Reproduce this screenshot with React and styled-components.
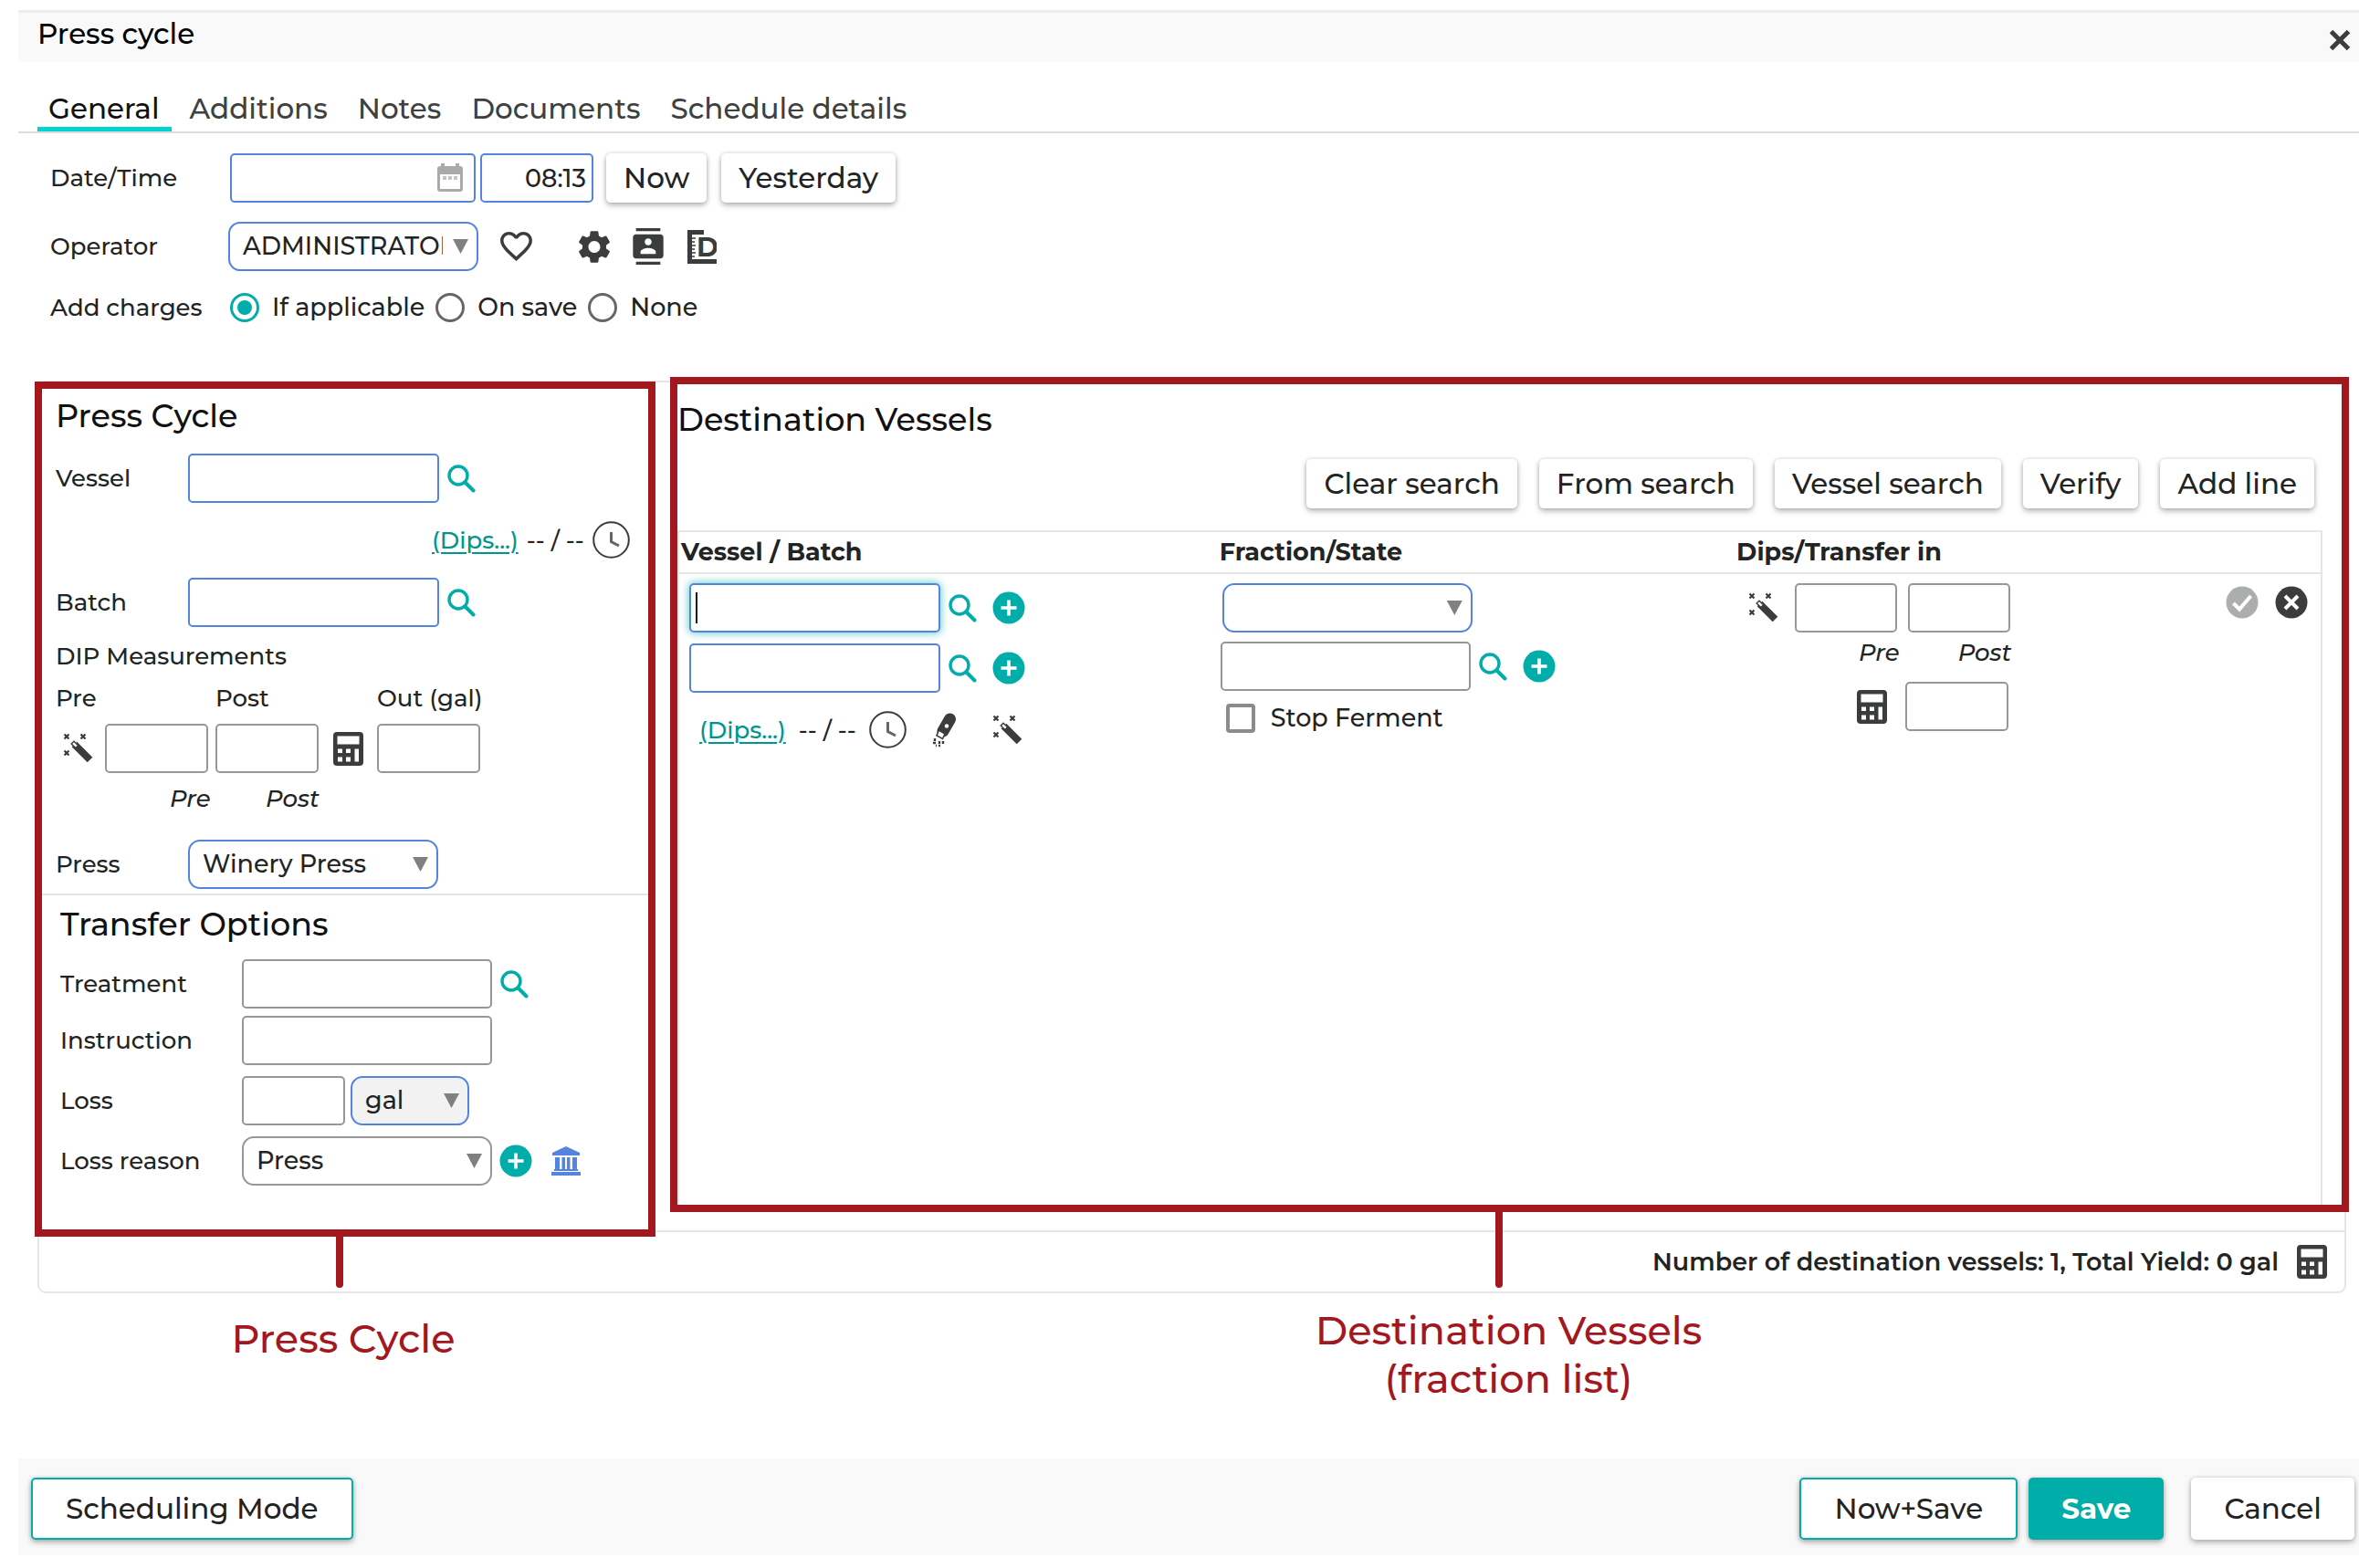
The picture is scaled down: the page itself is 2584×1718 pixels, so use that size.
import React, { useState } from "react";
import styled, { createGlobalStyle, css } from "styled-components";

const color = {
  text: "#222424",
  icon: "#3b3d3c",
  teal: "#00ada9",
  link: "#00968f",
  blue: "#5484e0",
  grey: "#979797",
  line: "#e6e6e6",
  bar: "#f9f9f9",
  red: "#a3171f",
};

const GlobalStyle = createGlobalStyle`
  *, *::before, *::after { box-sizing: border-box; }
  body {
    margin: 0;
    background: #fff;
    color: ${color.text};
    font-family: Montserrat, Inter, "Open Sans", sans-serif;
    font-size: 26px;
    font-weight: 500;
    line-height: 32px;
  }
  button, input, select { font: inherit; color: inherit; }
`;

/* ---------- page frame ---------- */

const Page = styled.div`
  padding: 11px 0 14px 20px;
`;

const TitleBar = styled.header`
  display: flex;
  justify-content: space-between;
  height: 57px;
  padding: 5px 9px 0 21px;
  border-top: 3px solid #ececec;
  background: ${color.bar};
`;

const Title = styled.h1`
  margin: 0;
  color: #000;
  font-size: 31px;
  font-weight: 500;
  line-height: 36px;
`;

const Tabs = styled.nav`
  display: flex;
  gap: 8px;
  padding: 28px 0 0 21px;
  border-bottom: 2px solid #dcdcdc;
`;

const Tab = styled.a`
  height: 48px;
  padding: 3px 13px 0 12px;
  border-bottom: 5px solid ${(p) => (p.$active ? "#00d4d0" : "transparent")};
  color: ${(p) => (p.$active ? "#111" : "#3f4141")};
  font-size: 31px;
  line-height: 40px;
  text-decoration: none;
`;

const Form = styled.div`
  display: grid;
  gap: 21px;
  padding: 22px 0 0 35px;
`;

/* ---------- shared parts ---------- */

const Row = styled.div`
  display: flex;
  align-items: center;
  gap: ${(p) => p.$gap ?? 0}px;
  margin-top: ${(p) => p.$top ?? 0}px;
  padding-left: ${(p) => p.$indent ?? 0}px;
  min-height: ${(p) => p.$height ?? 0}px;
`;

const Label = styled.label`
  flex: none;
  width: ${(p) => p.$width}px;
`;

const Text = styled.span`
  font-style: ${(p) => (p.$italic ? "italic" : "normal")};
  white-space: nowrap;
`;

const Field = styled.input`
  flex: none;
  width: ${(p) => p.$width ?? 275}px;
  height: 54px;
  padding: 0 6px;
  border: 2px solid ${(p) => (p.$required ? color.blue : color.grey)};
  border-radius: 5px;
  background: #fff;
  outline: none;
  font-size: 27px;
  text-align: ${(p) => p.$align ?? "left"};
`;

const FocusedField = styled.span`
  position: relative;
  display: flex;
  border-radius: 5px;
  box-shadow: 0 0 8px 1px rgba(0, 173, 169, 0.6);

  input { caret-color: transparent; }

  &::after {
    content: "";
    position: absolute;
    left: 7px;
    top: 10px;
    width: 2px;
    height: 34px;
    background: #111;
  }
`;

const DateField = styled.span`
  position: relative;
  display: flex;

  svg { position: absolute; right: 14px; top: 11px; }
`;

const SelectBox = styled.span`
  position: relative;
  display: flex;
  flex: none;
  width: ${(p) => p.$width ?? 274}px;

  &::after {
    content: "";
    position: absolute;
    right: 11px;
    top: 19px;
    width: 17px;
    height: 16px;
    background: #808080;
    clip-path: polygon(0 0, 100% 0, 50% 100%);
    pointer-events: none;
  }
`;

const SelectControl = styled.select`
  appearance: none;
  width: 100%;
  height: 54px;
  padding: 0 37px 0 14px;
  border: 2px solid ${(p) => (p.$required ? color.blue : color.grey)};
  border-radius: 13px;
  background: ${(p) => (p.$muted ? "#f2f2f2" : "#fff")};
  outline: none;
  font-size: 27px;
  text-overflow: clip;
`;

const Button = styled.button`
  height: 54px;
  padding: 0 19px;
  border: 0;
  border-radius: 5px;
  background: #fff;
  box-shadow: 0 3px 6px rgba(0, 0, 0, 0.28), 0 0 4px rgba(0, 0, 0, 0.14);
  font-size: 31px;
  line-height: 40px;
  white-space: nowrap;
`;

const ActionButton = styled(Button)`
  height: 68px;
  padding: 0 36px;
  ${(p) => p.$outlined && css`border: 2px solid ${color.teal};`}
  ${(p) => p.$primary && css`
    background: ${color.teal};
    color: #fff;
    font-weight: 700;
  `}
`;

const IconButton = styled.button`
  display: flex;
  flex: none;
  align-items: center;
  justify-content: center;
  padding: 0;
  border: 0;
  background: none;
  color: ${(p) => p.$color ?? color.icon};
  margin-left: ${(p) => p.$left ?? 0}px;
`;

const DipsLink = styled.a`
  color: ${color.link};
  text-decoration-thickness: 2px;
  text-underline-offset: 4px;
`;

const Radio = styled.input`
  appearance: none;
  flex: none;
  display: grid;
  place-items: center;
  width: 32px;
  height: 32px;
  margin: 0;
  border: 3px solid #666;
  border-radius: 50%;

  &:checked { border-color: ${color.teal}; }
  &:checked::after {
    content: "";
    width: 16px;
    height: 16px;
    border-radius: 50%;
    background: ${color.teal};
  }
`;

const Choice = styled.label`
  display: flex;
  align-items: center;
  gap: 14px;
  font-size: 27px;
`;

const Check = styled.input`
  appearance: none;
  width: 32px;
  height: 32px;
  margin: 0 3px 0 0;
  border: 4px solid #8b8b8b;
  border-radius: 4px;

  &:checked { background: ${color.teal}; }
`;

/* ---------- panel ---------- */

const Panel = styled.section`
  margin: 61px 14px 0 21px;
  border: 2px solid ${color.line};
  border-radius: 9px;
`;

const Columns = styled.div`
  display: grid;
  grid-template-columns: 680px minmax(0, 1fr);
  gap: 16px;
  margin: 0 -5px;
`;

const Frame = styled.section`
  position: relative;
  display: flex;
  flex-direction: column;
  border: 8px solid ${color.red};
  background: #fff;

  &::after {
    content: "";
    position: absolute;
    top: 100%;
    width: 8px;
    border-radius: 0 0 4px 4px;
    background: ${color.red};
  }
`;

const SourceFrame = styled(Frame)`
  margin: -1px 0 -7px;

  &::after { left: calc(50% - 10px); height: 64px; }
`;

const DestinationFrame = styled(Frame)`
  margin: -6px 0 20px;
  padding-top: 17px;

  &::after { left: calc(50% - 16px); height: 91px; }
`;

const Section = styled.div`
  padding: ${(p) => p.$pad};

  & + & { border-top: 2px solid ${color.line}; }
`;

const Heading = styled.h2`
  margin: 0;
  color: #111;
  font-size: 35px;
  font-weight: 500;
  line-height: 44px;
`;

const DipGrid = styled.div`
  display: grid;
  grid-template-columns: 54px 113px 8px 113px 64px 1fr;
  align-items: center;
  row-gap: 12px;
  margin-top: 14px;
`;

const Cell = styled.span`
  display: flex;
  grid-column: ${(p) => p.$col};
  justify-content: ${(p) => p.$justify ?? "flex-start"};
  font-style: ${(p) => (p.$italic ? "italic" : "normal")};
  padding-left: ${(p) => p.$indent ?? 0}px;
  white-space: nowrap;
`;

const Toolbar = styled.div`
  display: flex;
  justify-content: flex-end;
  gap: 24px;
  margin: 21px 30px 24px 0;
`;

const TableArea = styled.div`
  flex: 1;
  margin-right: 21px;
  border: 2px solid ${color.line};
  border-bottom: 0;
`;

const Table = styled.table`
  width: 100%;
  table-layout: fixed;
  border-collapse: collapse;

  th {
    height: 45px;
    padding: 0 0 0 2px;
    border-bottom: 2px solid ${color.line};
    font-size: 27px;
    font-weight: 700;
    text-align: left;
  }
  td {
    padding: 10px 0 0;
    vertical-align: top;
  }
`;

const Col = styled.col`
  width: ${(p) => p.$width};
`;

const Totals = styled.div`
  display: flex;
  align-items: center;
  justify-content: flex-end;
  gap: 20px;
  height: 67px;
  padding-right: 19px;
  border-top: 2px solid ${color.line};
  font-size: 27px;
  font-weight: 600;
`;

const Callouts = styled(Columns)`
  margin: 14px 11px 0 16px;
  color: ${color.red};
  font-size: 43px;
  line-height: 53px;
  text-align: center;
`;

const Callout = styled.p`
  margin: 0;
  padding-top: ${(p) => p.$drop ?? 0}px;
`;

const ActionBar = styled.footer`
  display: flex;
  gap: 12px;
  margin-top: 61px;
  padding: 21px 5px 17px 14px;
  background: ${color.bar};
`;

const Spacer = styled.span`
  flex: ${(p) => (p.$width ? "none" : 1)};
  width: ${(p) => p.$width ?? 0}px;
`;

/* ---------- icons ---------- */

const Svg = ({ w, h, box, children }) => (
  <svg width={w} height={h} viewBox={box} fill="currentColor" aria-hidden="true">
    {children}
  </svg>
);

const SearchIcon = () => (
  <Svg w={31} h={31} box="0 0 31 31">
    <circle cx="12" cy="12" r="10" fill="none" stroke="currentColor" strokeWidth="3.4" />
    <path d="M19.5 19.5L28.5 28.5" stroke="currentColor" strokeWidth="4" strokeLinecap="round" />
  </Svg>
);

const PlusIcon = () => (
  <Svg w={36} h={36} box="0 0 36 36">
    <circle cx="18" cy="18" r="17.5" />
    <path d="M18 9.5v17M9.5 18h17" stroke="#fff" strokeWidth="3.6" />
  </Svg>
);

const ClockIcon = () => (
  <Svg w={41} h={41} box="0 0 41 41">
    <circle cx="20.5" cy="20.5" r="19.3" fill="none" stroke="currentColor" strokeWidth="2" />
    <path d="M20.5 12v10.5l8.5 4.5" fill="none" stroke="#666" strokeWidth="3" />
  </Svg>
);

const WandIcon = () => (
  <Svg w={34} h={34} box="0 0 34 34">
    <path d="M12.5 12.5L29.5 29.5" stroke="currentColor" strokeWidth="8" />
    <path d="M12 9.2L16.6 13.8L13.8 16.6L9.2 12Z" fill="#fff" stroke="currentColor" strokeWidth="1.4" />
    <path
      d="M1.5 1.5l5 5M6.5 1.5l-5 5M19.5 1.5l5 5M24.5 1.5l-5 5M1.5 19.5l5 5M6.5 19.5l-5 5"
      stroke="currentColor"
      strokeWidth="2.2"
    />
  </Svg>
);

const CalculatorIcon = () => (
  <Svg w={33} h={37} box="0 0 33 37">
    <path
      fillRule="evenodd"
      d="M4 0h25a4 4 0 0 1 4 4v29a4 4 0 0 1-4 4H4a4 4 0 0 1-4-4V4a4 4 0 0 1 4-4zM4.500 4.500v9h24v-9zM5 18.500v4.500h5v-4.500zM14 18.500v4.500h5v-4.500zM5 27.500v5h5v-5zM14 27.500v5h5v-5zM23.500 18.500v14h4.500v-14z"
    />
  </Svg>
);

const CalendarIcon = () => (
  <Svg w={28} h={32} box="0 0 28 32">
    <path
      fill="#a9abaa"
      fillRule="evenodd"
      d="M4 0h4v3h12V0h4v3h1a3 3 0 0 1 3 3v22a3 3 0 0 1-3 3H3a3 3 0 0 1-3-3V6a3 3 0 0 1 3-3h1zM3 12v16h22V12z"
    />
    <path fill="#c4c6c5" d="M6 14h4v4H6zM12 14h4v4h-4zM18 14h4v4h-4z" />
  </Svg>
);

const HeartIcon = () => (
  <Svg w={35} h={32} box="2 3 20 18.35">
    <path d="M16.5 3c-1.74 0-3.41.81-4.5 2.09C10.91 3.81 9.24 3 7.5 3 4.42 3 2 5.42 2 8.5c0 3.78 3.4 6.86 8.55 11.54L12 21.35l1.45-1.32C18.6 15.36 22 12.28 22 8.5 22 5.42 19.58 3 16.5 3zm-4.4 15.55l-.1.1-.1-.1C7.14 14.24 4 11.39 4 8.5 4 6.5 5.5 5 7.5 5c1.54 0 3.04.99 3.57 2.36h1.87C13.46 5.99 14.96 5 16.5 5c2 0 3.5 1.5 3.5 3.5 0 2.89-3.14 5.74-7.9 10.05z" />
  </Svg>
);

const GearIcon = () => (
  <Svg w={34} h={35} box="2.6 2.4 18.8 19.2">
    <path d="M19.14 12.94c.04-.3.06-.61.06-.94 0-.32-.02-.64-.07-.94l2.03-1.58c.18-.14.23-.41.12-.61l-1.92-3.32c-.12-.22-.37-.29-.59-.22l-2.39.96c-.5-.38-1.03-.7-1.62-.94L14.4 2.81c-.04-.24-.24-.41-.48-.41h-3.84c-.24 0-.43.17-.47.41L9.25 5.35c-.59.24-1.13.57-1.62.94l-2.39-.96c-.22-.08-.47 0-.59.22L2.74 8.87c-.12.21-.08.47.12.61l2.03 1.58c-.05.3-.09.63-.09.94s.02.64.07.94l-2.03 1.58c-.18.14-.23.41-.12.61l1.920 3.320c.12.22.37.29.59.22l2.390-.96c.5.38 1.030.7 1.620.94l.36 2.540c.05.24.24.41.48.41h3.840c.24 0 .44-.17.47-.41l.36-2.540c.59-.24 1.130-.56 1.620-.94l2.390.96c.22.08.47 0 .59-.22l1.920-3.320c.12-.22.07-.47-.12-.61zM12 15.600c-1.980 0-3.600-1.620-3.600-3.600s1.620-3.600 3.600-3.600 3.600 1.620 3.600 3.600-1.620 3.600-3.600 3.600z" />
  </Svg>
);

const ContactsIcon = () => (
  <Svg w={34} h={40} box="2 0 20 24">
    <path d="M20 0H4v2h16V0zM4 24h16v-2H4v2zM20 4H4c-1.1 0-2 .9-2 2v12c0 1.1.9 2 2 2h16c1.100 0 2-.9 2-2V6c0-1.100-.9-2-2-2zm-8 2.750c1.240 0 2.250 1.010 2.250 2.250s-1.010 2.250-2.250 2.250S9.750 10.240 9.750 9 10.760 6.750 12 6.750zM17 17H7v-1.500c0-1.670 3.330-2.500 5-2.500s5 .83 5 2.500V17z" />
  </Svg>
);

const RulerIcon = () => (
  <Svg w={32} h={37} box="0 0 32 37">
    <path d="M0 0h18v5H5v27h27v5H0z" />
    <path d="M5 9h4M5 13h3M5 17h4M5 21h3M5 25h4M5 29h3" stroke="currentColor" strokeWidth="1.600" />
    <text x="10" y="29" fontSize="29" fontWeight="700">D</text>
  </Svg>
);

const TubeIcon = () => (
  <Svg w={28} h={38} box="0 0 28 38">
    <path d="M19.500 7L12 20" stroke="currentColor" strokeWidth="13" strokeLinecap="round" />
    <path d="M7.500 19L14 23L11.500 28.500L5 25Z" fill="#fff" stroke="currentColor" strokeWidth="1.600" />
    <circle cx="16" cy="14.500" r="2.200" fill="#fff" />
    <path d="M3 28v3M8 31v3M1 33h3M7 36h2M12 31v3M4 36h1" stroke="currentColor" strokeWidth="2.400" />
  </Svg>
);

const BankIcon = () => (
  <Svg w={32} h={32} box="0 0 32 32">
    <path d="M16 0L31 7v3H1V7zM4 12h5v13H4zM11.500 12h3.500v13h-3.500zM17 12h3.500v13H17zM23 12h5v13h-5zM3 25h26v2H3zM0 28h32v4H0z" />
  </Svg>
);

const CheckIcon = () => (
  <Svg w={36} h={36} box="0 0 36 36">
    <circle cx="18" cy="18" r="17.500" fill="#acaeae" />
    <path d="M8.500 19l6.500 6.500L27.500 11" fill="none" stroke="#fff" strokeWidth="4" />
  </Svg>
);

const RemoveIcon = () => (
  <Svg w={36} h={36} box="0 0 36 36">
    <circle cx="18" cy="18" r="17.500" />
    <path d="M11 11l14 14M25 11L11 25" stroke="#fff" strokeWidth="4" />
  </Svg>
);

const CloseIcon = () => (
  <Svg w={24} h={24} box="0 0 24 24">
    <path d="M2.500 2.500l19 19M21.500 2.500l-19 19" stroke="currentColor" strokeWidth="5" />
  </Svg>
);

/* ---------- composed controls ---------- */

const Select = ({ id, label, width, required, muted, options }) => (
  <SelectBox $width={width}>
    <SelectControl id={id} aria-label={label} $required={required} $muted={muted}>
      {options.map((o) => (
        <option key={o}>{o}</option>
      ))}
    </SelectControl>
  </SelectBox>
);

const Search = () => (
  <IconButton type="button" aria-label="Search" $color={color.teal} $left={9}>
    <SearchIcon />
  </IconButton>
);

const Add = ({ left = 17 }) => (
  <IconButton type="button" aria-label="Add" $color={color.teal} $left={left}>
    <PlusIcon />
  </IconButton>
);

const Wand = ({ left }) => (
  <IconButton type="button" aria-label="Fill in" $left={left}>
    <WandIcon />
  </IconButton>
);

const Calculate = ({ left }) => (
  <IconButton type="button" aria-label="Calculate" $left={left}>
    <CalculatorIcon />
  </IconButton>
);

const TABS = ["General", "Additions", "Notes", "Documents", "Schedule details"];
const CHARGES = ["If applicable", "On save", "None"];
const TOOLS = ["Clear search", "From search", "Vessel search", "Verify", "Add line"];

function PressCycleSection() {
  return (
    <Section $pad="8px 15px 5px">
      <Heading>Press Cycle</Heading>
      <Row $top={19}>
        <Label htmlFor="vessel" $width={145}>Vessel</Label>
        <Field id="vessel" $required />
        <Search />
      </Row>
      <Row $top={20} $gap={9} $indent={412}>
        <DipsLink href="#dips">(Dips...)</DipsLink>
        <Text>-- / --</Text>
        <IconButton type="button" aria-label="Dip time"><ClockIcon /></IconButton>
      </Row>
      <Row $top={21}>
        <Label htmlFor="batch" $width={145}>Batch</Label>
        <Field id="batch" $required />
        <Search />
      </Row>
      <Row $top={16}>DIP Measurements</Row>
      <DipGrid>
        <Cell $col="1 / 3">Pre</Cell>
        <Cell $col="4">Post</Cell>
        <Cell $col="6">Out (gal)</Cell>
        <Cell $col="1" $indent={8}><Wand /></Cell>
        <Field aria-label="Pre" $width={113} />
        <Cell $col="4"><Field aria-label="Post" $width={113} /></Cell>
        <Calculate />
        <Field aria-label="Out (gal)" $width={113} />
        <Cell $col="2" $indent={71} $italic>Pre</Cell>
        <Cell $col="4" $indent={55} $italic>Post</Cell>
      </DipGrid>
      <Row $top={29}>
        <Label htmlFor="press" $width={145}>Press</Label>
        <Select id="press" required options={["Winery Press"]} />
      </Row>
    </Section>
  );
}

function TransferSection() {
  return (
    <Section $pad="10px 20px 48px">
      <Heading>Transfer Options</Heading>
      <Row $top={16}>
        <Label htmlFor="treatment" $width={199}>Treatment</Label>
        <Field id="treatment" $width={274} />
        <Search />
      </Row>
      <Row $top={8}>
        <Label htmlFor="instruction" $width={199}>Instruction</Label>
        <Field id="instruction" $width={274} />
      </Row>
      <Row $top={12}>
        <Label htmlFor="loss" $width={199}>Loss</Label>
        <Row $gap={6}>
          <Field id="loss" $width={113} />
          <Select label="Loss unit" width={130} required muted options={["gal"]} />
        </Row>
      </Row>
      <Row $top={12}>
        <Label htmlFor="reason" $width={199}>Loss reason</Label>
        <Select id="reason" options={["Press"]} />
        <Add left={8} />
        <IconButton type="button" aria-label="Account" $color={color.blue} $left={21}>
          <BankIcon />
        </IconButton>
      </Row>
    </Section>
  );
}

function DestinationTable() {
  const [stopped, setStopped] = useState(false);
  return (
    <TableArea>
      <Table>
        <colgroup>
          <Col $width="32.8%" />
          <Col $width="31.5%" />
          <Col $width="28.9%" />
          <Col />
        </colgroup>
        <thead>
          <tr>
            <th>Vessel / Batch</th>
            <th>Fraction/State</th>
            <th>Dips/Transfer in</th>
            <th aria-label="Actions" />
          </tr>
        </thead>
        <tbody>
          <tr>
            <td>
              <Row $indent={11}>
                <FocusedField>
                  <Field aria-label="Destination vessel" $required autoFocus />
                </FocusedField>
                <Search />
                <Add />
              </Row>
              <Row $top={12} $indent={11}>
                <Field aria-label="Destination batch" $required />
                <Search />
                <Add />
              </Row>
              <Row $top={20} $gap={14} $indent={22}>
                <DipsLink href="#dips">(Dips...)</DipsLink>
                <Text>-- / --</Text>
                <IconButton type="button" aria-label="Dip time"><ClockIcon /></IconButton>
                <IconButton type="button" aria-label="Sample" $left={14}><TubeIcon /></IconButton>
                <Wand left={24} />
              </Row>
            </td>
            <td>
              <Row $indent={5}>
                <Select label="Fraction" required options={[""]} />
              </Row>
              <Row $top={10} $indent={3}>
                <Field aria-label="State" $width={274} />
                <Search />
                <Add />
              </Row>
              <Row $top={14} $indent={9}>
                <Choice>
                  <Check
                    type="checkbox"
                    checked={stopped}
                    onChange={(e) => setStopped(e.target.checked)}
                  />
                  <Text>Stop Ferment</Text>
                </Choice>
              </Row>
            </td>
            <td>
              <Row $gap={12} $indent={15}>
                <Wand />
                <Row $indent={5}><Field aria-label="Pre" $width={112} /></Row>
                <Field aria-label="Post" $width={112} />
              </Row>
              <Row $top={6} $gap={64} $indent={136}>
                <Text $italic>Pre</Text>
                <Text $italic>Post</Text>
              </Row>
              <Row $top={16} $gap={20} $indent={134}>
                <Calculate />
                <Field aria-label="Transfer in" $width={113} />
              </Row>
            </td>
            <td>
              <Row $gap={18} $indent={18} $height={42}>
                <IconButton type="button" aria-label="Confirm line"><CheckIcon /></IconButton>
                <IconButton type="button" aria-label="Remove line"><RemoveIcon /></IconButton>
              </Row>
            </td>
          </tr>
        </tbody>
      </Table>
    </TableArea>
  );
}

export default function App() {
  const [charge, setCharge] = useState("If applicable");
  return (
    <Page>
      <GlobalStyle />
      <TitleBar>
        <Title>Press cycle</Title>
        <IconButton type="button" aria-label="Close"><CloseIcon /></IconButton>
      </TitleBar>
      <Tabs>
        {TABS.map((tab, i) => (
          <Tab key={tab} href={`#${tab}`} $active={i === 0}>{tab}</Tab>
        ))}
      </Tabs>

      <Form>
        <Row>
          <Label htmlFor="date" $width={197}>Date/Time</Label>
          <Row $gap={5}>
            <DateField>
              <Field id="date" $width={269} $required />
              <CalendarIcon />
            </DateField>
            <Field aria-label="Time" $width={124} $required $align="right" defaultValue="08:13" />
          </Row>
          <Row $gap={16} $indent={14}>
            <Button type="button">Now</Button>
            <Button type="button">Yesterday</Button>
          </Row>
        </Row>
        <Row>
          <Label htmlFor="operator" $width={195}>Operator</Label>
          <Select id="operator" required options={["ADMINISTRATOR"]} />
          <IconButton type="button" aria-label="Favourite" $left={24}><HeartIcon /></IconButton>
          <IconButton type="button" aria-label="Settings" $left={51}><GearIcon /></IconButton>
          <IconButton type="button" aria-label="Contacts" $left={25}><ContactsIcon /></IconButton>
          <IconButton type="button" aria-label="Dip chart" $left={26}><RulerIcon /></IconButton>
        </Row>
        <Row $height={38}>
          <Label as="span" id="charges" $width={197}>Add charges</Label>
          <Row role="radiogroup" aria-labelledby="charges" $gap={12}>
            {CHARGES.map((c) => (
              <Choice key={c}>
                <Radio type="radio" name="charges" checked={charge === c} onChange={() => setCharge(c)} />
                {c}
              </Choice>
            ))}
          </Row>
        </Row>
      </Form>

      <Panel>
        <Columns>
          <SourceFrame>
            <PressCycleSection />
            <TransferSection />
          </SourceFrame>
          <DestinationFrame>
            <Heading>Destination Vessels</Heading>
            <Toolbar>
              {TOOLS.map((t) => (
                <Button key={t} type="button">{t}</Button>
              ))}
            </Toolbar>
            <DestinationTable />
          </DestinationFrame>
        </Columns>
        <Totals>
          <span>Number of destination vessels: 1, Total Yield: 0 gal</span>
          <Calculate />
        </Totals>
      </Panel>

      <Callouts>
        <Callout $drop={9}>Press Cycle</Callout>
        <Callout>
          Destination Vessels
          <br />
          (fraction list)
        </Callout>
      </Callouts>

      <ActionBar>
        <ActionButton type="button" $outlined>Scheduling Mode</ActionButton>
        <Spacer />
        <ActionButton type="button" $outlined>Now+Save</ActionButton>
        <ActionButton type="button" $primary>Save</ActionButton>
        <Spacer $width={6} />
        <ActionButton type="button">Cancel</ActionButton>
      </ActionBar>
    </Page>
  );
}
